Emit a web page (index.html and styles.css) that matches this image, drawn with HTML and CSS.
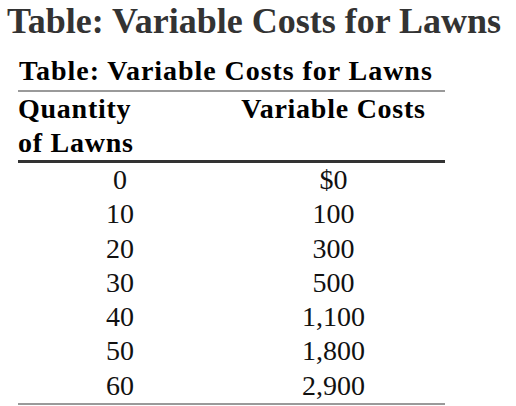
FILE: index.html
```html
<!DOCTYPE html>
<html lang="en">
<head>
    <meta charset="UTF-8">
    <meta name="viewport" content="width=device-width, initial-scale=1.0">
    <title>Table: Variable Costs for Lawns</title>
    <link rel="stylesheet" href="styles.css">
</head>
<body>
    <h1 class="page-title">Table: Variable Costs for Lawns</h1>

    <table class="cost-table">
        <caption>Table: Variable Costs for Lawns</caption>
        <thead>
            <tr>
                <th class="qty-head">Quantity<br>of Lawns</th>
                <th class="cost-head">Variable Costs</th>
            </tr>
        </thead>
        <tbody>
            <tr><td>0</td><td>$0</td></tr>
            <tr><td>10</td><td>100</td></tr>
            <tr><td>20</td><td>300</td></tr>
            <tr><td>30</td><td>500</td></tr>
            <tr><td>40</td><td>1,100</td></tr>
            <tr><td>50</td><td>1,800</td></tr>
            <tr><td>60</td><td>2,900</td></tr>
        </tbody>
    </table>
</body>
</html>
```

FILE: styles.css
```css
body, html {
    margin: 0;
    background-color: #fff;
    font-family: "Liberation Serif", "Times New Roman", serif;
}

body {
    padding: 1px 8px 0 7px;
}

.page-title {
    margin: 0;
    font-size: 36px;
    font-weight: bold;
    color: #333;
    line-height: 41px;
}

.cost-table {
    margin: 12px 0 0 11px;
    width: 427px;
    border-collapse: collapse;
    color: #111;
}

.cost-table caption {
    text-align: left;
    padding: 0 0 2px 1px;
    font-size: 28px;
    font-weight: bold;
    letter-spacing: 0.95px;
    line-height: 34px;
    color: #000;
}

.cost-table th {
    font-size: 28px;
    font-weight: bold;
    letter-spacing: 0.75px;
    line-height: 34px;
    padding: 0;
    vertical-align: top;
    color: #000;
}

.cost-table thead tr {
    border-top: 2px solid #9a9a9a;
    border-bottom: 3px solid #333;
}

.qty-head {
    width: 204px;
    text-align: left;
    padding-left: 1px;
}

.cost-head {
    text-align: center;
}

.cost-table td {
    font-size: 28px;
    line-height: 34.3px;
    padding: 0;
    text-align: center;
}

.cost-table tbody tr:last-child {
    border-bottom: 2px solid #9a9a9a;
}
```
